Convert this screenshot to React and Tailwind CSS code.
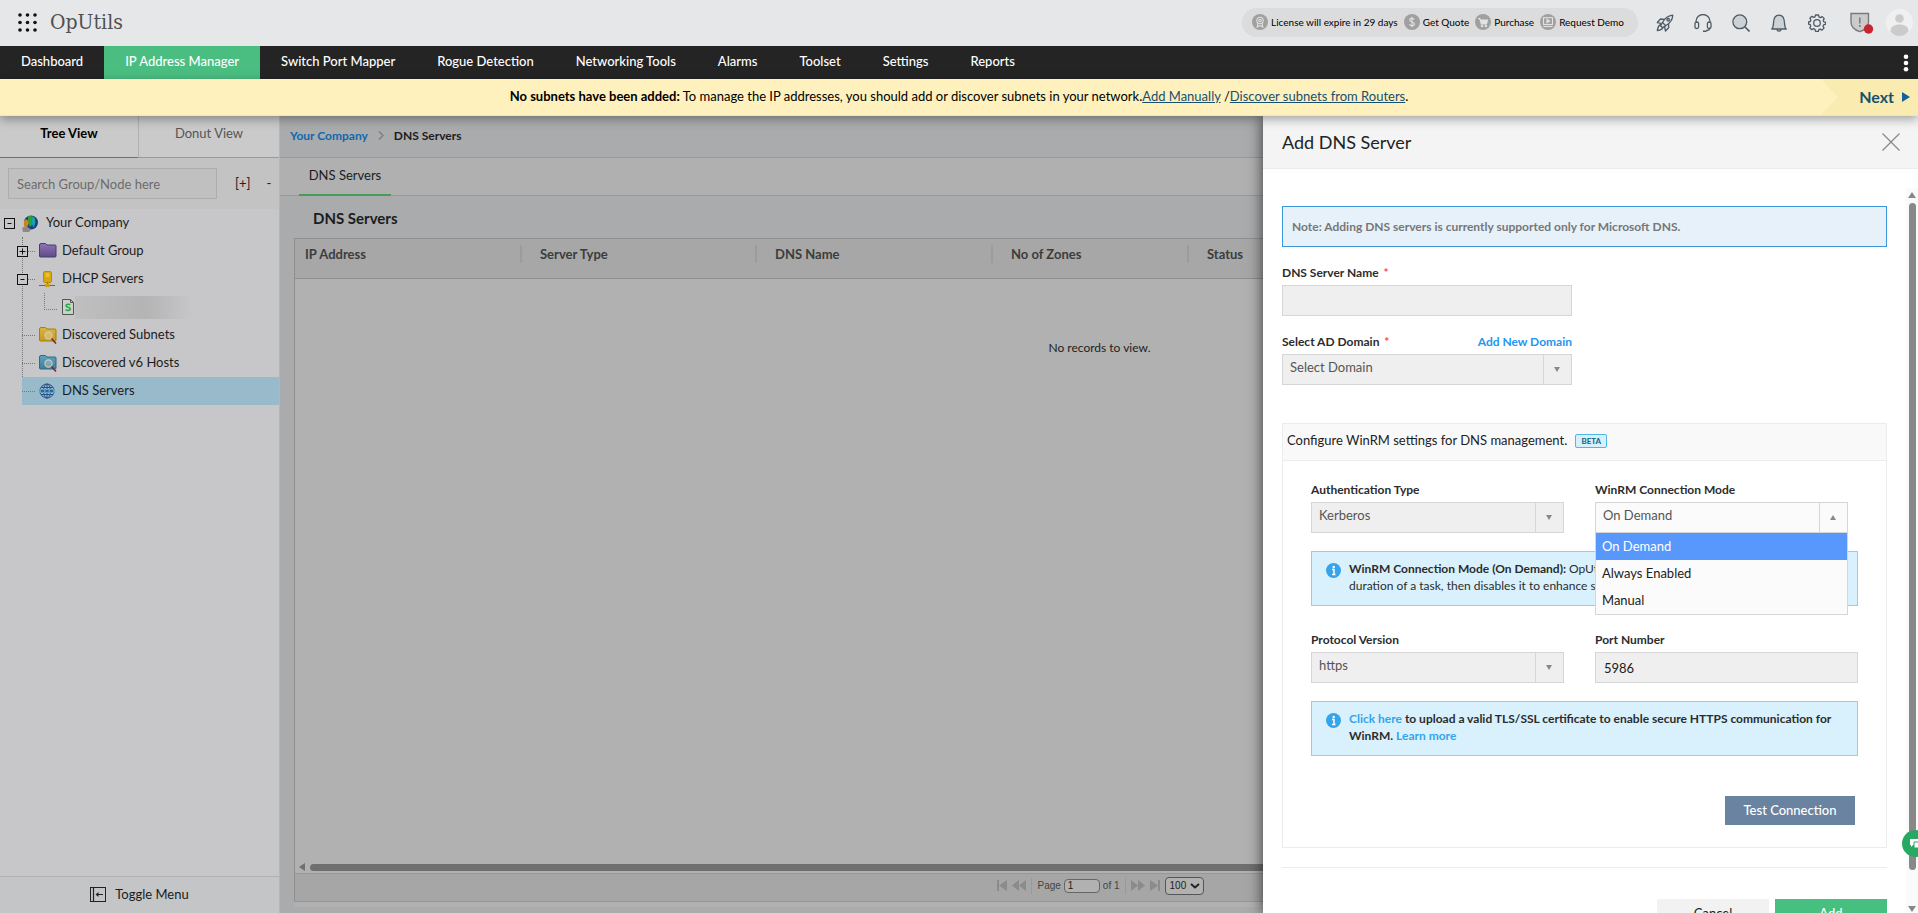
import React, { useState } from 'react';

const NAV_ITEMS = [
  'Dashboard',
  'IP Address Manager',
  'Switch Port Mapper',
  'Rogue Detection',
  'Networking Tools',
  'Alarms',
  'Toolset',
  'Settings',
  'Reports',
];

const MODES = ['On Demand', 'Always Enabled', 'Manual'];

const AppsIcon = () => (
  <svg width="19" height="19" viewBox="0 0 19 19" fill="#111">
    {[2, 9.5, 17].map((y) => [2, 9.5, 17].map((x) => <circle key={`${x}-${y}`} cx={x} cy={y} r="1.8" />))}
  </svg>
);

const PillIcon = ({ children }) => (
  <svg width="16" height="16" viewBox="0 0 16 16" className="shrink-0" fill="none" stroke="#e2e2e2" strokeWidth="1.1">
    <circle cx="8" cy="8" r="8" fill="#a0a0a0" stroke="none" />
    {children}
  </svg>
);

const PILL_LINKS = [
  {
    label: 'License will expire in 29 days',
    icon: (
      <PillIcon>
        <circle cx="8" cy="6.5" r="3.2" />
        <circle cx="8" cy="6.5" r="1.2" />
        <path d="M6 9.2 5.2 13 8 11.6 10.8 13 10 9.2" />
      </PillIcon>
    ),
  },
  {
    label: 'Get Quote',
    icon: (
      <PillIcon>
        <path d="M10.3 5.6C9.9 4.7 9.1 4.4 8 4.4c-1.3 0-2.2.7-2.2 1.7C5.8 8.6 10.4 7.3 10.4 9.9c0 1.1-1 1.8-2.4 1.8-1.3 0-2.2-.5-2.5-1.5M8 2.8v10.4" />
      </PillIcon>
    ),
  },
  {
    label: 'Purchase',
    icon: (
      <PillIcon>
        <path d="M3 4.5h1.8l1.5 5.5h5.2l1-4H5.3" fill="#e2e2e2" />
        <circle cx="7" cy="12" r=".7" />
        <circle cx="10.8" cy="12" r=".7" />
      </PillIcon>
    ),
  },
  {
    label: 'Request Demo',
    icon: (
      <PillIcon>
        <rect x="3.5" y="3.7" width="9" height="6.8" />
        <path d="M7 5.5v3.2L9.6 7.1z" fill="#e2e2e2" />
        <path d="M3.5 12.5h9" />
      </PillIcon>
    ),
  },
];

const ToolIcon = ({ label, children }) => (
  <button aria-label={label}>
    <svg width="18" height="18" viewBox="0 0 18 18" fill="none" stroke="currentColor" strokeWidth="1.3" strokeLinejoin="round">
      {children}
    </svg>
  </button>
);

const Header = () => (
  <header className="flex h-[46px] shrink-0 items-center justify-between bg-[#e5e7e9] pb-[2px] pl-[18px] pr-[5px]">
    <div className="flex items-center gap-[13px]">
      <button aria-label="Apps">
        <AppsIcon />
      </button>
      <span className="font-['Roboto_Slab','DejaVu_Serif_Condensed','DejaVu_Serif',serif] text-[21px] leading-6 text-[#505050]">
        OpUtils
      </span>
    </div>
    <div className="flex items-center">
      <div className="mr-[18px] flex h-[29px] items-center gap-[6px] rounded-full bg-[#dcdcdc] pl-[10px] pr-[14px]">
        {PILL_LINKS.map((link) => (
          <a key={link.label} href="#" className="flex items-center gap-[3px] text-[10px] leading-4 text-black">
            {link.icon}
            {link.label}
          </a>
        ))}
      </div>
      <div className="flex items-center gap-5 pt-[2px] text-[#4d5b66]">
        <ToolIcon label="Quick start">
          <path d="M6.5 8.5C9 4 12 1.7 16.8 1.2c-.3 4.5-2.5 7.8-7 10.6L6.5 8.5z" />
          <circle cx="12.2" cy="5.8" r="1.3" />
          <path d="M8.5 5.3L4.5 5 1.3 8.5l4 .8M12.5 9.8l.3 3.7-3.3 3.5-1-4.500M5 10.5c-2 .5-3.2 2.8-3.7 6.2 3.2-.5 5.3-1.5 6-3.7" />
          <path d="M6.5 8.5L4.5 11.8 6.3 13.5l3.5-1.7" />
        </ToolIcon>
        <ToolIcon label="Support">
          <path d="M2 9V7.5a7 7 0 0 1 14 0V9M16 13.5c0 2-1.200 3-4 3" />
          <path d="M1 9.5q0-1.5 1.8-1.5 1.8 0 1.8 1.5v3.5q0 1.5-1.8 1.5Q1 14.5 1 13z" />
          <path d="M13.4 9.5q0-1.5 1.8-1.5Q17 8 17 9.5V13q0 1.5-1.8 1.5-1.8 0-1.8-1.5z" />
          <path d="M9 17.3h3.5" strokeWidth="1.6" />
        </ToolIcon>
        <ToolIcon label="Search">
          <circle cx="7.8" cy="7.8" r="6.9" fill="#cdd2d5" />
          <path d="M12.8 12.8l4.7 4.7" strokeWidth="1.6" />
        </ToolIcon>
        <ToolIcon label="Notifications">
          <path d="M1.8 15c1.4-1.3 1.6-3 1.7-6C3.7 4 5.5 1.2 9 1.2S14.3 4 14.5 9c.1 3 .3 4.7 1.7 6z" fill="#cdd2d5" />
          <path d="M6.8 15.2c.3 1.5 1 2 2.2 2s1.900-.5 2.200-2" />
        </ToolIcon>
        <ToolIcon label="Settings">
          <path d="M7.5 1h3l.5 2 1.400.6 1.800-1 2 2-1 1.900.6 1.300 1.700.4v2.100l-1.900.6-.6 1.400 1 1.800-2 2-1.900-1-1.300.5-.4 1.700H7.500L7 15.300l-1.300-.6-1.900 1-2-2 1-1.800-.6-1.400-1.700-.4V8l1.800-.5.6-1.400-1-1.800 2-2 1.900 1L7 2.800z" />
          <circle cx="9" cy="9" r="3.3" />
        </ToolIcon>
      </div>
      <button aria-label="Security alerts" className="ml-6 pt-[2px]">
        <svg width="24" height="22" viewBox="0 0 24 22">
          <path d="M1 1.5h17.5v8.5c0 5-3.5 8-8.7 9.7C4.5 18 1 15 1 10z" fill="#cbcbcb" stroke="#7b7b7b" strokeWidth="1.4" />
          <path d="M9.8 5.5v6M9.8 13v2" stroke="#7b7b7b" strokeWidth="1.5" />
          <circle cx="18.5" cy="17" r="4.7" fill="#c9252d" />
        </svg>
      </button>
      <button aria-label="Profile" className="ml-3">
        <svg width="27" height="27" viewBox="0 0 27 27">
          <circle cx="13.5" cy="13.5" r="13.5" fill="#f0f0f0" />
          <circle cx="13.5" cy="9.5" r="4.3" fill="#cbcbcb" />
          <path d="M4.5 22.5c0-5 3.5-7 9-7s9 2 9 7c-2.5 3-5.5 4.500-9 4.500s-6.500-1.500-9-4.500z" fill="#cbcbcb" />
        </svg>
      </button>
    </div>
  </header>
);

const NavBar = () => (
  <nav className="flex h-[33px] shrink-0 items-stretch bg-[#242424] text-[13px] text-white">
    {NAV_ITEMS.map((item) => (
      <a
        key={item}
        href="#"
        className={`flex items-center px-[21px] pb-[2px] font-medium ${item === 'IP Address Manager' ? 'bg-[#4abe81]' : ''}`}
      >
        {item}
      </a>
    ))}
    <button aria-label="More" className="ml-auto pr-[9px]">
      <svg width="6" height="18" viewBox="0 0 6 18" fill="#fff">
        <circle cx="3" cy="2.7" r="2.3" />
        <circle cx="3" cy="9" r="2.3" />
        <circle cx="3" cy="15.3" r="2.3" />
      </svg>
    </button>
  </nav>
);

const Banner = () => (
  <div className="relative z-20 flex h-[37px] shrink-0 items-center justify-center border-b border-[#f3e6ae] bg-[#fef1bd] text-[13px] text-black shadow-[0_3px_10px_rgba(0,0,0,0.35)]">
    <p>
      <b>No subnets have been added:</b> To manage the IP addresses, you should add or discover subnets in your network.
      <a href="#" className="text-[#17506f] underline">Add Manually</a> /
      <a href="#" className="text-[#17506f] underline">Discover subnets from Routers</a>.
    </p>
    <div className="absolute inset-y-0 right-0 flex">
      <svg width="18" height="36" viewBox="0 0 18 36" fill="#faebb0">
        <path d="M0 0h18v36H0l17-18z" />
      </svg>
      <button className="flex items-center gap-2 bg-[#faebb0] pl-5 pr-2 text-[16px] font-bold text-[#17506f]">
        Next
        <svg width="8" height="10" viewBox="0 0 8 10" fill="#17609a"><path d="M0 0l8 5-8 5z" /></svg>
      </button>
    </div>
  </div>
);

const Expander = ({ open }) => (
  <button aria-label={open ? 'Collapse' : 'Expand'} className="h-[11px] w-[11px] shrink-0">
    <svg width="11" height="11" viewBox="0 0 11 11" stroke="#111" fill="#c7c7c9">
      <rect x=".5" y=".5" width="10" height="10" />
      <path d={open ? 'M3.5 5.5h4' : 'M2.5 5.5h6M5.5 2.5v6'} />
    </svg>
  </button>
);

const FolderIcon = ({ from, to, edge, lens }) => (
  <svg width="18" height="17" viewBox="0 0 18 17">
    <defs>
      <linearGradient id={`f${from.slice(1)}`} x1="0" y1="0" x2="0" y2="1">
        <stop offset="0" stopColor={from} />
        <stop offset="1" stopColor={to} />
      </linearGradient>
    </defs>
    <path d="M.5 2q0-1.5 1.5-1.5h4.5l1.5 1.5h8q1 0 1 1V13q0 1-1 1H1.5q-1 0-1-1z" fill={`url(#f${from.slice(1)})`} stroke={edge} />
    {lens && (
      <g fill="none">
        <circle cx="9.5" cy="8.5" r="3.6" stroke="#d0cab4" strokeWidth="1.2" fill="#fff" fillOpacity=".25" />
        <path d="M12.5 11.5l4.5 5" stroke="#7d2a35" strokeWidth="1.6" />
      </g>
    )}
  </svg>
);

const ServerIcon = () => (
  <svg width="18" height="17" viewBox="0 0 18 17">
    <rect x="4.5" y=".5" width="8" height="11" rx="1.5" fill="#d9a90c" stroke="#b48b14" />
    <path d="M6.5 3h4M6.5 5h4" stroke="#f3d56c" />
    <path d="M8.5 11.5v3M0 14.5h16" stroke="#666" />
    <rect x="6" y="12.5" width="5" height="3.5" rx="1" fill="#cf9f0c" />
  </svg>
);

const GlobeIcon = () => (
  <svg width="17" height="17" viewBox="0 0 17 17">
    <circle cx="9" cy="7.5" r="7" fill="#173f8a" />
    <path d="M6 1.2c3-.8 5 0 7 2L11 9l-3 3-2-4z" fill="#2f9c3c" />
    <path d="M11 1.5c3 2.5 3 7 .5 11-2-3-2-8-.5-11z" fill="#17a2ad" />
    <path d="M2.5 5C5 3.5 6.5 5.5 6.5 8s-1.5 4.5-3.5 4.5C1.5 11 1.5 7 2.5 5z" fill="#c9861d" />
    <path d="M0 12.5l5-1 4 3-2 2.5H1z" fill="#8a8a8a" />
  </svg>
);

const DnsIcon = () => (
  <svg width="16" height="16" viewBox="0 0 16 16" fill="none" stroke="#2b4f87">
    <circle cx="8" cy="8" r="7" />
    <ellipse cx="8" cy="8" rx="3.5" ry="7" />
    <path d="M8 1v14M2 4.5h12M2 11.5h12" />
    <rect x="0" y="6" width="16" height="4" fill="#5f9fc4" stroke="none" />
    <path d="M2 8h3M6.5 8h3M11 8h3" stroke="#22508a" strokeWidth="1.5" />
  </svg>
);

const DocIcon = () => (
  <svg width="12" height="16" viewBox="0 0 12 16">
    <path d="M.5.5h8l3 3v12H.5z" fill="#ccd2ca" stroke="#555" />
    <path d="M8.5.5v3h3" fill="none" stroke="#555" />
    <path d="M8.2 6C7 4.8 4 5 4 6.7c0 1.8 4.3 1.2 4.3 3.2 0 1.8-3.3 2-4.6.7" fill="none" stroke="#27a84a" strokeWidth="1.6" />
  </svg>
);

const TREE = [
  { label: 'Default Group', expander: 'closed', icon: <FolderIcon from="#8d74b8" to="#5f4a86" edge="#4b3a70" /> },
  { label: 'DHCP Servers', expander: 'open', icon: <ServerIcon /> },
  { leaf: true },
  { label: 'Discovered Subnets', icon: <FolderIcon from="#d9b54a" to="#c79a17" edge="#a67f10" lens /> },
  { label: 'Discovered v6 Hosts', icon: <FolderIcon from="#5fa3bd" to="#3d7e9b" edge="#2f6a85" lens /> },
  { label: 'DNS Servers', selected: true, icon: <DnsIcon /> },
];

const TreeNode = ({ node }) => {
  if (node.leaf) {
    return (
      <li className="flex h-7 pl-11">
        <div className="h-[17px] w-[13px] border-b border-l border-dotted border-[#777]" />
        <div className="flex items-center gap-px pl-[5px]">
          <DocIcon />
          <span className="h-[23px] w-[118px] bg-linear-to-r from-[#bfbfc0] via-[#b4b4b5] via-60% to-[#c7c7c9]" />
        </div>
      </li>
    );
  }
  return (
    <li className={`ml-[22px] flex h-7 items-center ${node.selected ? 'bg-[#98bacb]' : ''}`}>
      {node.expander && <span className="-ml-[5px] flex"><Expander open={node.expander === 'open'} /></span>}
      <span className={`border-b border-dotted border-[#777] ${node.expander ? 'w-[7px]' : 'w-[13px]'}`} />
      <a href="#" className="flex items-center pl-[4px] leading-5 text-[#1c1c1c]">
        <span className="w-[23px]">{node.icon}</span>
        <span className="pb-[2px]">{node.label}</span>
      </a>
    </li>
  );
};

const Sidebar = () => (
  <aside className="flex w-[280px] shrink-0 flex-col border-r border-[#b5b6b8] bg-[#c7c7c9] text-[13px]">
    <div className="flex h-[42px] shrink-0 bg-[#cacaca]">
      <button className="w-[138px] border-b border-[#3a8f67] pb-[5px] font-bold text-black">Tree View</button>
      <button className="flex-1 border-b border-l border-[#999] border-l-[#b0b0b0] pb-[5px] text-[#555]">Donut View</button>
    </div>
    <div className="flex h-[51px] shrink-0 items-center bg-[#c3c3c3] pl-2 pr-2 text-[#222]">
      <input
        type="text"
        aria-label="Search Group/Node"
        placeholder="Search Group/Node here"
        className="h-[31px] w-[209px] shrink-0 border border-[#adadad] bg-[#c0c0c1] px-2 outline-none placeholder:text-[#6c6c6c]"
      />
      <button className="ml-[18px]">[+]</button>
      <button className="ml-4">-</button>
    </div>
    <div className="flex-1">
      <div className="flex h-7 items-center pl-1">
        <Expander open />
        <a href="#" className="flex items-center gap-[7px] pl-[7px] leading-5 text-[#1c1c1c]">
          <GlobeIcon />
          <span className="pb-[2px]">Your Company</span>
        </a>
      </div>
      <div className="relative">
        <span className="absolute left-[22px] top-0 h-[154px] border-l border-dotted border-[#777]" />
        <ul className="relative">
          {TREE.map((node, i) => (
            <TreeNode key={i} node={node} />
          ))}
        </ul>
      </div>
    </div>
    <button className="flex h-[37px] shrink-0 items-center justify-center gap-[9px] border-t border-[#b0b1b3] bg-[#c3c5c7] text-[#1c1c1c]">
      <svg width="16" height="16" viewBox="0 0 16 16" fill="none" stroke="#222">
        <rect x=".5" y=".5" width="15" height="14" />
        <path d="M3.5.5v14M13 7.5H6" strokeWidth="1.2" />
        <path d="M8.5 5L5.5 7.5l3 2.5z" fill="#222" stroke="none" />
      </svg>
      Toggle Menu
    </button>
  </aside>
);

const PagerIcon = ({ d, label }) => (
  <button aria-label={label}>
    <svg width="14" height="11" viewBox="0 0 14 11" fill="#8b8b8b"><path d={d} /></svg>
  </button>
);

const Pager = () => (
  <div className="flex h-[29px] shrink-0 items-center justify-center gap-[3px] border-b border-t border-[#979797] bg-[#a6a6a6] pb-1 font-['Liberation_Sans',Arial,sans-serif] text-[10px] text-[#444]">
    <PagerIcon label="First page" d="M2 0h2v11H2zM12 0v11L4 5.5z" />
    <PagerIcon label="Previous page" d="M7 0v11L0 5.5zM14 0v11L7 5.5z" />
    <span className="mx-[2px] h-4 w-px bg-[#999]" />
    <label htmlFor="page">Page</label>
    <input id="page" type="text" defaultValue="1" className="h-[14px] w-9 rounded-sm border border-[#666] bg-[#b1b1b1] px-[3px] text-[#222]" />
    <span>of 1</span>
    <span className="mx-[2px] h-4 w-px bg-[#999]" />
    <PagerIcon label="Next page" d="M0 0v11l7-5.5zM7 0v11l7-5.5z" />
    <PagerIcon label="Last page" d="M2 0v11l8-5.5zM10 0h2v11h-2z" />
    <span className="relative flex">
      <select aria-label="Rows per page" className="h-[18px] w-[39px] appearance-none rounded-sm border border-[#555] bg-[#b1b1b1] pl-1 text-[10px] text-[#222]">
        <option>100</option>
      </select>
      <svg width="10" height="6" viewBox="0 0 10 6" className="pointer-events-none absolute right-1 top-[6px]" fill="none" stroke="#222" strokeWidth="2">
        <path d="M1 1l4 3.5L9 1" />
      </svg>
    </span>
  </div>
);

const COLUMNS = [
  { label: 'IP Address', width: 'w-[235px]' },
  { label: 'Server Type', width: 'w-[235px]' },
  { label: 'DNS Name', width: 'w-[236px]' },
  { label: 'No of Zones', width: 'w-[196px]' },
  { label: 'Status', width: 'w-auto' },
];

const ServersPage = () => (
  <main className="flex min-w-0 flex-1 flex-col bg-[#a9abad]">
    <div className="flex h-[42px] shrink-0 items-center gap-[10px] border-b border-[#989898] pb-[2px] pl-[10px] text-[12px] font-bold">
      <a href="#" className="text-[#0f68ad]">Your Company</a>
      <svg width="6" height="9" viewBox="0 0 6 9" fill="none" stroke="#808080" strokeWidth="1.5"><path d="M1 .5l4 4-4 4" /></svg>
      <span className="text-[#1c1c1c]">DNS Servers</span>
    </div>
    <div className="flex h-[38px] shrink-0 border-b border-[#999] bg-[#b0b0b0] pl-[19px]">
      <button className="h-[38px] w-[92px] border-b-2 border-[#4a9a58] text-[13px] text-[#1c1c1c]">DNS Servers</button>
    </div>
    <h2 className="flex h-[42px] shrink-0 items-center pl-[33px] pt-[3px] text-[15px] font-bold text-[#1c1c1c]">DNS Servers</h2>
    <div className="mx-[14px] mb-[6px] flex flex-1 flex-col bg-[#b1b1b1] pb-[5px]">
      <div className="flex flex-1 flex-col border-l border-t border-[#8f8f8f]">
        <table className="w-full table-fixed text-left text-[13px] text-[#3c3c3c]">
          <thead>
            <tr className="h-[39px] border-b border-[#8f8f8f] bg-[#a7a7a7]">
              {COLUMNS.map((col) => (
                <th key={col.label} scope="col" className={`${col.width} pb-2 pl-[10px] pr-2 font-bold`}>
                  <div className={`flex h-[18px] items-center ${col.label === 'Status' ? '' : 'border-r-2 border-[#9c9c9c]'}`}>
                    {col.label}
                  </div>
                </th>
              ))}
            </tr>
          </thead>
          <tbody>
            <tr>
              <td colSpan="5" className="pt-[60px] text-center text-[12px] text-[#222]">No records to view.</td>
            </tr>
          </tbody>
        </table>
        <div className="mt-auto flex h-3 items-center gap-[5px] pl-1">
          <svg width="6" height="8" viewBox="0 0 6 8" fill="#6f6f6f"><path d="M6 0v8L0 4z" /></svg>
          <span className="h-[7px] flex-1 rounded-full bg-[#6f6f6f]" />
        </div>
        <Pager />
      </div>
    </div>
  </main>
);

const Field = ({ id, label, required, action, className, children }) => (
  <div className={className}>
    <div className="flex h-[18px] items-center justify-between text-[12px] font-bold leading-4 text-[#2c2c2c]">
      <label htmlFor={id}>
        {label}
        {required && <span className="pl-[2px] text-[#f44]"> *</span>}
      </label>
      {action}
    </div>
    <div className="mt-[3px]">{children}</div>
  </div>
);

const Dropdown = ({ id, options, value, open, onChange, onToggle }) => (
  <div className={`relative flex h-[31px] border border-[#d6d6d6] ${open ? 'bg-[#fbfbfb]' : 'bg-[#efefef]'}`}>
    <select
      id={id}
      value={value}
      onChange={(e) => onChange && onChange(e.target.value)}
      className="min-w-0 flex-1 appearance-none pb-1 pl-[7px] text-[13px] text-[#555] outline-none"
    >
      {options.map((o) => (
        <option key={o}>{o}</option>
      ))}
    </select>
    <button
      type="button"
      aria-label="Toggle options"
      onClick={onToggle}
      className="flex w-7 items-center justify-center border-l border-[#d6d6d6] pr-[2px]"
    >
      <svg width="6" height="5" viewBox="0 0 6 5" fill="#888">
        <path d={open ? 'M0 5h6L3 0z' : 'M0 0h6L3 5z'} />
      </svg>
    </button>
    {open && (
      <ul role="listbox" className="absolute -left-px -right-px top-[29px] z-10 border border-[#d6d6d6] bg-[#fbfbfb] text-[13px] leading-5">
        {options.map((o) => (
          <li
            key={o}
            role="option"
            aria-selected={o === value}
            onClick={() => onChange(o)}
            className={`flex h-[27px] cursor-pointer items-center px-[6px] pb-px ${o === value ? 'bg-[#5897fb] text-white' : 'text-[#222]'}`}
          >
            {o}
          </li>
        ))}
      </ul>
    )}
  </div>
);

const InfoBox = ({ children }) => (
  <div className="flex h-[55px] gap-2 border border-[#81d4fa] bg-[#d9f1fd] pl-[14px] pr-4 pt-2 text-[12px] leading-[17px] text-[#2c2c2c]">
    <svg width="15" height="15" viewBox="0 0 15 15" className="mt-[3px] shrink-0">
      <circle cx="7.5" cy="7.5" r="7.5" fill="#35a4ea" />
      <circle cx="7.7" cy="4" r="1.2" fill="#fff" />
      <path d="M6 6.5h2v5M6 11.5h3.5" stroke="#fff" strokeWidth="1.5" fill="none" />
    </svg>
    <p>{children}</p>
  </div>
);

const AddServerPanel = () => {
  const [mode, setMode] = useState('On Demand');
  const [open, setOpen] = useState(true);

  return (
    <section className="absolute inset-y-0 right-0 z-10 flex w-[655px] flex-col overflow-hidden bg-white shadow-[0_0_14px_rgba(0,0,0,0.7)]">
      <div className="flex h-[53px] shrink-0 items-center justify-between border-b border-[#ebebeb] bg-[#f4f4f4] pl-[19px] pr-[18px]">
        <h1 className="text-[18px] leading-6 text-[#222]">Add DNS Server</h1>
        <button aria-label="Close">
          <svg width="18" height="18" viewBox="0 0 18 18" stroke="#888" strokeWidth="1.2"><path d="M.5.5l17 17M17.5.5l-17 17" /></svg>
        </button>
      </div>

      <div className="flex min-h-0 flex-1">
        <form className="min-w-0 flex-1 overflow-hidden pl-[19px] pr-[19px] pt-[37px]" onSubmit={(e) => e.preventDefault()}>
          <p className="flex h-[41px] items-center border border-[#3c96dc] bg-[#e6f1fa] px-[9px] text-[12px] font-bold text-[#777]">
            Note: Adding DNS servers is currently supported only for Microsoft DNS.
          </p>

          <Field id="server" label="DNS Server Name" required className="mt-[17px] w-[290px]">
            <input id="server" type="text" className="block h-[31px] w-full border border-[#d6d6d6] bg-[#efefef] px-2 text-[13px] outline-none" />
          </Field>
          <Field
            id="domain"
            label="Select AD Domain"
            required
            className="mt-[17px] w-[290px]"
            action={<a href="#" className="text-[#2196f3]">Add New Domain</a>}
          >
            <Dropdown id="domain" options={['Select Domain']} value="Select Domain" />
          </Field>

          <div className="mt-[38px] border border-[#ececec]">
            <div className="flex h-[37px] items-center gap-2 border-b border-[#ececec] bg-[#f9f9f9] pb-[2px] pl-1 text-[13px] text-[#222]">
              Configure WinRM settings for DNS management.
              <span className="flex h-[14px] w-8 items-center justify-center rounded-xs border border-[#4db8e8] bg-[#d4f1fd] text-[8px] font-bold text-[#17607f]">
                BETA
              </span>
            </div>
            <div className="px-7 pb-[22px] pt-5">
              <div className="grid grid-cols-[253px_1fr] gap-x-[31px]">
                <Field id="auth" label="Authentication Type">
                  <Dropdown id="auth" options={['Kerberos']} value="Kerberos" />
                </Field>
                <Field id="mode" label="WinRM Connection Mode" className="pr-[10px]">
                  <Dropdown
                    id="mode"
                    options={MODES}
                    value={mode}
                    open={open}
                    onChange={setMode}
                    onToggle={() => setOpen(!open)}
                  />
                </Field>
              </div>
              <div className="mt-[18px]">
                <InfoBox>
                  <b>WinRM Connection Mode (On Demand):</b> OpUtils enables WinRM on the server only for the duration of a task, then disables it to enhance security.
                </InfoBox>
              </div>
              <div className="mt-[25px] grid grid-cols-[253px_1fr] gap-x-[31px]">
                <Field id="protocol" label="Protocol Version">
                  <Dropdown id="protocol" options={['https']} value="https" />
                </Field>
                <Field id="port" label="Port Number">
                  <input id="port" type="text" defaultValue="5986" className="block h-[31px] w-full border border-[#d6d6d6] bg-[#efefef] px-2 text-[13px] text-[#222] outline-none" />
                </Field>
              </div>
              <div className="mt-[18px]">
                <InfoBox>
                  <b>
                    <a href="#" className="text-[#35a4ea]">Click here</a> to upload a valid TLS/SSL certificate to enable secure HTTPS communication for WinRM.{' '}
                    <a href="#" className="text-[#35a4ea]">Learn more</a>
                  </b>
                </InfoBox>
              </div>
              <div className="mt-10 flex justify-end pr-[3px]">
                <button type="button" className="h-[29px] w-[130px] bg-[#6a83a0] text-[13px] font-medium text-white">Test Connection</button>
              </div>
            </div>
          </div>

          <div className="mt-[19px] flex justify-end gap-[6px] border-t border-[#ececec] pt-[31px] text-[13px]">
            <button type="button" className="h-[29px] w-28 bg-[#f2f2f2] text-[#222]">Cancel</button>
            <button type="submit" className="h-[29px] w-28 bg-[#47bf80] font-medium text-white">Add</button>
          </div>
        </form>

        <div className="mt-[19px] flex w-3 shrink-0 flex-col items-center gap-[5px] bg-[#fafafa] pt-1 pb-px">
          <svg width="8" height="6" viewBox="0 0 8 6" fill="#888"><path d="M0 6h8L4 0z" /></svg>
          <span className="mb-[31px] w-[7px] flex-1 rounded-full bg-[#888]" />
          <svg width="8" height="6" viewBox="0 0 8 6" fill="#888"><path d="M0 0h8L4 6z" /></svg>
        </div>
      </div>

      <button aria-label="Chat" className="absolute -right-[11px] bottom-[56px] h-[27px] w-[27px] rounded-full bg-[#27a964] pl-[7px]">
        <svg width="14" height="12" viewBox="0 0 14 12">
          <path d="M1 1h8v6H4L2 9V7H1z" fill="#fff" />
          <path d="M5 4h8v6h-1v2l-2-2H5z" fill="#fff" stroke="#27a964" />
        </svg>
      </button>
    </section>
  );
};

const App = () => (
  <div className="flex h-screen flex-col overflow-hidden font-[Lato,sans-serif]">
    <Header />
    <NavBar />
    <Banner />
    <div className="relative flex min-h-0 flex-1">
      <Sidebar />
      <ServersPage />
      <AddServerPanel />
    </div>
  </div>
);

export default App;
